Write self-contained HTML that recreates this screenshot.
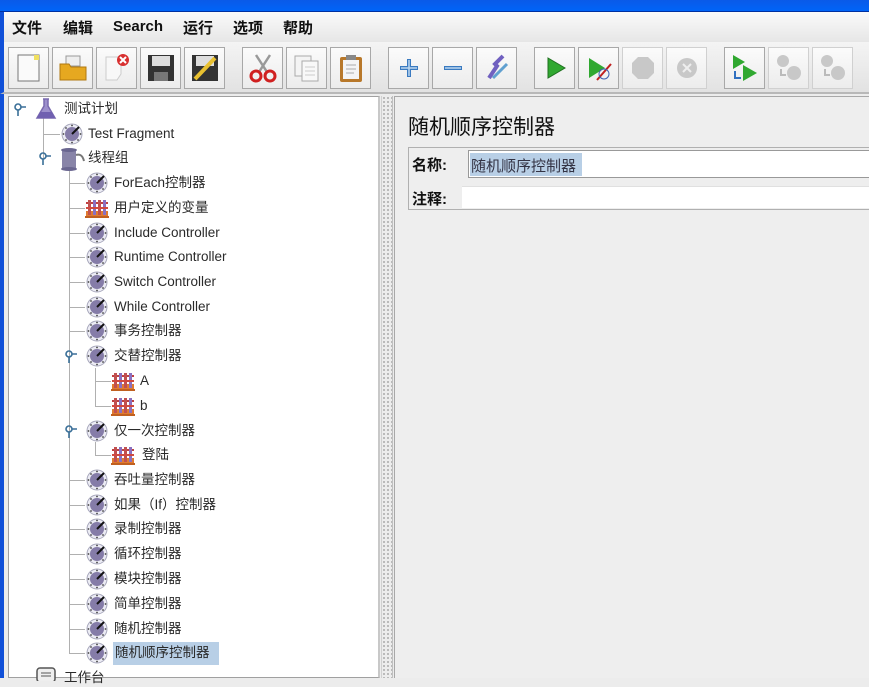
<!DOCTYPE html>
<html><head><meta charset="utf-8">
<style>
*{margin:0;padding:0;box-sizing:border-box}
body{width:869px;height:678px;overflow:hidden;position:relative;background:#ececec;font-family:"Liberation Sans","Noto Sans CJK SC","WenQuanYi Zen Hei",sans-serif;}
.abs{position:absolute}
#title{left:0;top:0;width:869px;height:12px;background:linear-gradient(#0a5ae8,#0064f8);border-bottom:1px solid #0030a0}
#menu{left:0;top:12px;width:869px;height:30px;background:linear-gradient(#fafafa,#e6e6e6);border-left:4px solid #1050d8}
#menu span{position:absolute;top:5px;font-size:15px;font-weight:bold;color:#111}
#tb{left:0;top:42px;width:869px;height:52px;background:linear-gradient(#f4f4f4,#e2e2e2);border-left:4px solid #1050d8;border-bottom:2px solid #b8b8b8}
.btn{position:absolute;top:5px;width:41px;height:42px;border:1px solid #a8a8a8;background:linear-gradient(#fbfbfb,#ececec)}
.btn svg{position:absolute;left:4px;top:4px}
#tree{left:8px;top:96px;width:372px;height:582px;background:#fff;border:1px solid #a0a0a0;border-right:2px solid #c8c8c8}
#leftb{left:0;top:94px;width:4px;height:584px;background:#1050d8}
#split{left:381px;top:96px;width:12px;height:582px;background:#ececec;background-image:radial-gradient(circle,#b0b0b0 0.8px,transparent 1.2px);background-size:4px 4px;border-left:1px solid #d0d0d0;border-right:1px solid #c0c0c0}
#right{left:394px;top:96px;width:475px;height:582px;background:#eeeeee;border-top:1px solid #a8a8a8;border-left:1px solid #a8a8a8}
.t{position:absolute;font-size:13.5px;color:#2a2a2a;white-space:nowrap;line-height:18px}
.vl{position:absolute;width:1px;background:#b0b0b0}
.hl{position:absolute;height:1px;background:#b0b0b0}
.ic{position:absolute}
</style></head><body>
<svg width="0" height="0" style="position:absolute">
<defs>
<g id="g"><circle cx="11" cy="11" r="10" fill="#ececf4" stroke="#a8a8bc" stroke-width="1"/><circle cx="11" cy="11" r="7" fill="#857ca8"/><circle cx="11" cy="2.5" r="0.9" fill="#444"/><circle cx="11" cy="19.5" r="0.9" fill="#444"/><circle cx="2.5" cy="11" r="0.9" fill="#444"/><circle cx="19.5" cy="11" r="0.9" fill="#444"/><circle cx="5" cy="5" r="0.9" fill="#444"/><circle cx="5" cy="17" r="0.9" fill="#444"/><circle cx="17" cy="17" r="0.9" fill="#444"/><path d="M11 11 L18 4" stroke="#111" stroke-width="2"/></g>
<g id="c"><rect x="1" y="14" width="22" height="5" fill="#e07a30"/><rect x="1" y="5" width="22" height="2" fill="#c04040"/><rect x="3" y="3" width="3" height="15" fill="#c05050"/><rect x="8" y="3" width="3" height="15" fill="#8a70c0"/><rect x="13" y="3" width="3" height="15" fill="#c05050"/><rect x="18" y="3" width="3" height="15" fill="#8a70c0"/><rect x="1" y="10" width="22" height="2" fill="#d04a40"/><rect x="0" y="19" width="24" height="2" fill="#c06020"/></g>
<g id="k"><circle cx="4" cy="4" r="3" fill="none" stroke="#3a6f98" stroke-width="1.6"/><path d="M4 7 V13 M7 4 H12" stroke="#3a6f98" stroke-width="1.6"/></g>
</defs></svg>

<div id="title" class="abs"></div>
<div id="menu" class="abs">
<span style="left:8px">文件</span><span style="left:59px">编辑</span><span style="left:109px;top:6px">Search</span><span style="left:179px">运行</span><span style="left:229px">选项</span><span style="left:279px">帮助</span>
</div>
<div id="tb" class="abs">
<div class="btn" style="left:4px"><svg width="32" height="32"><rect x="5" y="3" width="21" height="26" fill="#fafafa" stroke="#777"/><rect x="21" y="3" width="5" height="5" fill="#f0e060"/></svg></div>
<div class="btn" style="left:48px"><svg width="32" height="32"><rect x="9" y="4" width="14" height="10" fill="#eee" stroke="#999"/><path d="M3 12 H12 L14 15 H29 V28 H3Z" fill="#e6a820" stroke="#b07810"/></svg></div>
<div class="btn" style="left:92px"><svg width="32" height="32"><path d="M5 5 H20 V22 L16 28 H5Z" fill="#f8f8f8" stroke="#ccc"/><circle cx="22" cy="8" r="6" fill="#d83030"/><path d="M19 5 L25 11 M25 5 L19 11" stroke="#fff" stroke-width="2"/></svg></div>
<div class="btn" style="left:136px"><svg width="32" height="32"><rect x="3" y="3" width="26" height="26" fill="#333"/><rect x="7" y="4" width="18" height="10" fill="#ddd"/><rect x="9" y="20" width="14" height="9" fill="#777"/></svg></div>
<div class="btn" style="left:180px"><svg width="32" height="32"><rect x="3" y="3" width="26" height="26" fill="#333"/><rect x="7" y="4" width="18" height="10" fill="#ddd"/><path d="M6 27 L26 6" stroke="#e8c030" stroke-width="4"/></svg></div>
<div class="btn" style="left:238px"><svg width="32" height="32"><path d="M9 3 L20 20 M23 3 L12 20" stroke="#999" stroke-width="2.5"/><circle cx="9" cy="24" r="5" fill="none" stroke="#d02020" stroke-width="3"/><circle cx="23" cy="24" r="5" fill="none" stroke="#d02020" stroke-width="3"/></svg></div>
<div class="btn" style="left:282px"><svg width="32" height="32"><rect x="4" y="4" width="16" height="20" fill="#f4f4f4" stroke="#aaa"/><rect x="11" y="9" width="16" height="20" fill="#f8f8f8" stroke="#aaa"/><path d="M14 15 H24 M14 19 H24 M14 23 H24" stroke="#ccc"/></svg></div>
<div class="btn" style="left:326px"><svg width="32" height="32"><rect x="5" y="5" width="22" height="25" rx="2" fill="#b8782a"/><rect x="8" y="8" width="16" height="19" fill="#f4f4f4"/><rect x="11" y="3" width="10" height="5" fill="#888"/><path d="M11 13 H21 M11 17 H21 M11 21 H19" stroke="#aaa"/></svg></div>
<div class="btn" style="left:384px"><svg width="32" height="32"><path d="M16 7 V25 M7 16 H25" stroke="#3a7ac0" stroke-width="4"/><path d="M16 8 V24 M8 16 H24" stroke="#bcd8f0" stroke-width="1.5"/></svg></div>
<div class="btn" style="left:428px"><svg width="32" height="32"><path d="M7 16 H25" stroke="#3a7ac0" stroke-width="4"/><path d="M8 16 H24" stroke="#bcd8f0" stroke-width="1.5"/></svg></div>
<div class="btn" style="left:472px"><svg width="32" height="32"><path d="M8 26 L16 14 L14 12 L22 4" stroke="#7060c0" stroke-width="4" fill="none"/><path d="M12 26 L26 12" stroke="#60a0d0" stroke-width="3"/></svg></div>
<div class="btn" style="left:530px"><svg width="32" height="32"><path d="M9 6 L26 16 L9 26Z" fill="#30a830" stroke="#207020"/></svg></div>
<div class="btn" style="left:574px"><svg width="32" height="32"><path d="M6 6 L22 16 L6 26Z" fill="#30a830"/><path d="M14 28 L28 12" stroke="#c02020" stroke-width="2"/><circle cx="21" cy="22" r="5" fill="none" stroke="#4060b0"/></svg></div>
<div class="btn" style="left:618px;border-color:#d0d0d0"><svg width="32" height="32"><path d="M11 5 H21 L27 11 V21 L21 27 H11 L5 21 V11Z" fill="#c8c8c8"/></svg></div>
<div class="btn" style="left:662px;border-color:#d0d0d0"><svg width="32" height="32"><circle cx="16" cy="16" r="10" fill="#c8c8c8"/><path d="M12 12 L20 20 M20 12 L12 20" stroke="#eee" stroke-width="2"/></svg></div>
<div class="btn" style="left:720px"><svg width="32" height="32"><path d="M4 3 L16 10 L4 17Z" fill="#30a830"/><path d="M14 13 L28 21 L14 29Z" fill="#30a830"/><path d="M6 19 V26 H12" stroke="#3070c0" stroke-width="2" fill="none"/></svg></div>
<div class="btn" style="left:764px;border-color:#d0d0d0"><svg width="32" height="32"><circle cx="10" cy="9" r="6" fill="#c8c8c8"/><circle cx="21" cy="21" r="7" fill="#c8c8c8"/><path d="M8 17 V23 H13" stroke="#bbb" stroke-width="2" fill="none"/></svg></div>
<div class="btn" style="left:808px;border-color:#d0d0d0"><svg width="32" height="32"><circle cx="10" cy="9" r="6" fill="#c8c8c8"/><circle cx="21" cy="21" r="7" fill="#c8c8c8"/><path d="M8 17 V23 H13" stroke="#bbb" stroke-width="2" fill="none"/></svg></div>
</div>

<div id="leftb" class="abs"></div>
<div id="tree" class="abs"></div>
<div id="split" class="abs"></div>
<div id="right" class="abs">
<div class="abs" style="left:13px;top:14px;font-size:21px;color:#111">随机顺序控制器</div>
<div class="abs" style="left:13px;top:50px;width:470px;height:63px;border:1px solid #b0b0b0;border-right:none"></div>
<div class="abs" style="left:17px;top:57px;font-size:15px;font-weight:bold;color:#111">名称:</div>
<div class="abs" style="left:73px;top:53px;width:410px;height:28px;background:#fff;border:1px solid #999;border-right:none"></div>
<div class="abs" style="left:75px;top:56px;width:112px;height:23px;background:#b8cfe6"></div>
<div class="abs" style="left:76px;top:58px;font-size:15px;color:#334">随机顺序控制器</div>
<div class="abs" style="left:17px;top:91px;font-size:15px;font-weight:bold;color:#111">注释:</div>
<div class="abs" style="left:67px;top:89px;width:416px;height:22px;background:#fff;border-top:1px solid #e0e0e0"></div>
</div>

<div class="vl" style="left:43px;top:118px;height:40px"></div>
<div class="hl" style="left:43px;top:134px;width:17px"></div>
<div class="vl" style="left:69px;top:170px;height:484px"></div>
<div class="vl" style="left:95px;top:368px;height:39px"></div>
<div class="vl" style="left:95px;top:442px;height:14px"></div>
<div class="hl" style="left:95px;top:381px;width:16px"></div>
<div class="hl" style="left:95px;top:406px;width:16px"></div>
<div class="hl" style="left:95px;top:455px;width:16px"></div>

<svg class="ic" style="left:14px;top:103px" width="16" height="14"><use href="#k"/></svg>
<svg class="ic" style="left:39px;top:152px" width="16" height="14"><use href="#k"/></svg>
<svg class="ic" style="left:65px;top:350px" width="16" height="14"><use href="#k"/></svg>
<svg class="ic" style="left:65px;top:425px" width="16" height="14"><use href="#k"/></svg>

<svg class="ic" style="left:35px;top:97px" width="22" height="24"><path d="M8 2 H14 M9 2 V9 L2 21 H20 L13 9 V2" fill="#9d90cc" stroke="#7a6ab0" stroke-width="1.5"/><path d="M5 15 H17 L20 21 H2Z" fill="#7060b0"/></svg>
<div class="t" style="left:64px;top:100px">测试计划</div>
<svg class="ic" style="left:61px;top:123px" width="22" height="22"><use href="#g"/></svg>
<div class="t" style="left:88px;top:125px">Test Fragment</div>
<svg class="ic" style="left:60px;top:147px" width="26" height="24"><rect x="2" y="3" width="14" height="19" fill="#8884a8"/><ellipse cx="9" cy="3" rx="8" ry="2" fill="#6a6690"/><ellipse cx="9" cy="22" rx="8" ry="2" fill="#6a6690"/><path d="M16 8 Q22 6 24 14" stroke="#777" stroke-width="2" fill="none"/></svg>
<div class="t" style="left:88px;top:149px">线程组</div>

<div class="hl" style="left:69px;top:183px;width:16px"></div><svg class="ic" style="left:86px;top:172px" width="22" height="22"><use href="#g"/></svg><div class="t" style="left:114px;top:174px">ForEach控制器</div>
<div class="hl" style="left:69px;top:208px;width:16px"></div><svg class="ic" style="left:85px;top:197px" width="24" height="22"><use href="#c"/></svg><div class="t" style="left:114px;top:199px">用户定义的变量</div>
<div class="hl" style="left:69px;top:233px;width:16px"></div><svg class="ic" style="left:86px;top:222px" width="22" height="22"><use href="#g"/></svg><div class="t" style="left:114px;top:224px">Include Controller</div>
<div class="hl" style="left:69px;top:257px;width:16px"></div><svg class="ic" style="left:86px;top:246px" width="22" height="22"><use href="#g"/></svg><div class="t" style="left:114px;top:248px">Runtime Controller</div>
<div class="hl" style="left:69px;top:282px;width:16px"></div><svg class="ic" style="left:86px;top:271px" width="22" height="22"><use href="#g"/></svg><div class="t" style="left:114px;top:273px">Switch Controller</div>
<div class="hl" style="left:69px;top:307px;width:16px"></div><svg class="ic" style="left:86px;top:296px" width="22" height="22"><use href="#g"/></svg><div class="t" style="left:114px;top:298px">While Controller</div>
<div class="hl" style="left:69px;top:331px;width:16px"></div><svg class="ic" style="left:86px;top:320px" width="22" height="22"><use href="#g"/></svg><div class="t" style="left:114px;top:322px">事务控制器</div>
<svg class="ic" style="left:86px;top:345px" width="22" height="22"><use href="#g"/></svg><div class="t" style="left:114px;top:347px">交替控制器</div>
<svg class="ic" style="left:111px;top:370px" width="24" height="22"><use href="#c"/></svg><div class="t" style="left:140px;top:372px">A</div>
<svg class="ic" style="left:111px;top:395px" width="24" height="22"><use href="#c"/></svg><div class="t" style="left:140px;top:397px">b</div>
<svg class="ic" style="left:86px;top:420px" width="22" height="22"><use href="#g"/></svg><div class="t" style="left:114px;top:422px">仅一次控制器</div>
<svg class="ic" style="left:111px;top:444px" width="24" height="22"><use href="#c"/></svg><div class="t" style="left:142px;top:446px">登陆</div>
<div class="hl" style="left:69px;top:480px;width:16px"></div><svg class="ic" style="left:86px;top:469px" width="22" height="22"><use href="#g"/></svg><div class="t" style="left:114px;top:471px">吞吐量控制器</div>
<div class="hl" style="left:69px;top:505px;width:16px"></div><svg class="ic" style="left:86px;top:494px" width="22" height="22"><use href="#g"/></svg><div class="t" style="left:114px;top:496px">如果（If）控制器</div>
<div class="hl" style="left:69px;top:529px;width:16px"></div><svg class="ic" style="left:86px;top:518px" width="22" height="22"><use href="#g"/></svg><div class="t" style="left:114px;top:520px">录制控制器</div>
<div class="hl" style="left:69px;top:554px;width:16px"></div><svg class="ic" style="left:86px;top:543px" width="22" height="22"><use href="#g"/></svg><div class="t" style="left:114px;top:545px">循环控制器</div>
<div class="hl" style="left:69px;top:579px;width:16px"></div><svg class="ic" style="left:86px;top:568px" width="22" height="22"><use href="#g"/></svg><div class="t" style="left:114px;top:570px">模块控制器</div>
<div class="hl" style="left:69px;top:604px;width:16px"></div><svg class="ic" style="left:86px;top:593px" width="22" height="22"><use href="#g"/></svg><div class="t" style="left:114px;top:595px">简单控制器</div>
<div class="hl" style="left:69px;top:629px;width:16px"></div><svg class="ic" style="left:86px;top:618px" width="22" height="22"><use href="#g"/></svg><div class="t" style="left:114px;top:620px">随机控制器</div>
<div class="hl" style="left:69px;top:653px;width:16px"></div><svg class="ic" style="left:86px;top:642px" width="22" height="22"><use href="#g"/></svg>
<div class="abs" style="left:113px;top:642px;width:106px;height:23px;background:#b8cfe6"></div><div class="t" style="left:115px;top:644px">随机顺序控制器</div>

<svg class="ic" style="left:36px;top:667px" width="20" height="14"><rect x="1" y="1" width="18" height="14" rx="3" fill="#eee" stroke="#555" stroke-width="1.5"/><path d="M5 6 H15 M5 9 H15" stroke="#555"/></svg>
<div class="t" style="left:64px;top:669px">工作台</div>
</body></html>
